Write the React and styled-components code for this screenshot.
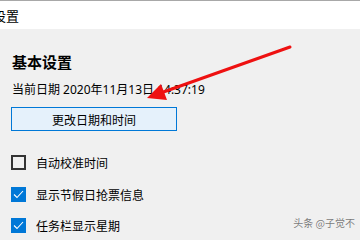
import React from "react";
import styled, { createGlobalStyle } from "styled-components";

const GlobalStyle = createGlobalStyle`
  html, body {
    margin: 0;
    padding: 0;
    background: #f0f0f0;
  }
  body {
    font-family: "Noto Sans", "Noto Sans CJK SC", sans-serif;
    color: #000;
  }
`;

const SettingsWindow = styled.div`
  position: relative;
  width: 360px;
  height: 240px;
  overflow: hidden;
  background: #f0f0f0;
  border-top: 1px solid #a8a8a8;
  box-sizing: border-box;
`;

const TitleBar = styled.div`
  height: 28px;
  background: #fff;
  display: flex;
  align-items: center;
`;

const Title = styled.span`
  margin-left: -7px;
  font-size: 13px;
  font-family: "Noto Sans CJK SC", sans-serif;
`;

const Content = styled.div`
  padding: 0 12px;
`;

const Heading = styled.h2`
  margin: 23px 0 0;
  font-size: 15px;
  line-height: 20px;
  font-weight: 700;
  font-family: "Noto Sans CJK SC", sans-serif;
`;

const DateLine = styled.div`
  margin-top: 10px;
  font-size: 12px;
  line-height: 16px;
`;

const ChangeButton = styled.button`
  display: block;
  margin: 9px 0 0 -1px;
  width: 166px;
  height: 24px;
  padding: 0;
  background: #e5f1fb;
  border: 1px solid #0078d7;
  font-family: "Noto Sans CJK SC", sans-serif;
  font-size: 12px;
  color: #000;
`;

const CheckList = styled.div`
  margin-top: 16px;
  display: flex;
  flex-direction: column;
`;

const CheckRow = styled.label`
  height: 31.5px;
  display: flex;
  align-items: center;
  font-size: 12px;
  font-family: "Noto Sans CJK SC", sans-serif;
`;

const Box = styled.span`
  width: 15px;
  height: 15px;
  margin-left: -1px;
  box-sizing: border-box;
  display: flex;
  align-items: center;
  justify-content: center;
  background: ${(p) => (p.$checked ? "#0078d7" : "transparent")};
  border: ${(p) => (p.$checked ? "none" : "2px solid #333")};
`;

const CheckText = styled.span`
  margin-left: 10px;
`;

const Overlay = styled.svg`
  position: absolute;
  left: 0;
  top: 0;
  pointer-events: none;
`;

const Watermark = styled.div`
  position: absolute;
  right: 5px;
  bottom: 10px;
  font-size: 10px;
  color: #7a7a7a;
  font-family: "Noto Sans CJK SC", sans-serif;
  text-shadow: 0 0 1px #fff;
`;

function CheckItem({ checked, children }) {
  return (
    <CheckRow>
      <Box $checked={checked}>
        {checked && (
          <svg width="11" height="9" viewBox="0 0 11 9">
            <path d="M1 4.5 L4 7.5 L10 1" fill="none" stroke="#fff" strokeWidth="1.1" />
          </svg>
        )}
      </Box>
      <CheckText>{children}</CheckText>
    </CheckRow>
  );
}

export default function App() {
  return (
    <>
      <GlobalStyle />
      <SettingsWindow>
        <TitleBar>
          <Title>设置</Title>
        </TitleBar>
        <Content>
          <Heading>基本设置</Heading>
          <DateLine>当前日期 2020年11月13日 14:37:19</DateLine>
          <ChangeButton>更改日期和时间</ChangeButton>
          <CheckList>
            <CheckItem checked={false}>自动校准时间</CheckItem>
            <CheckItem checked>显示节假日抢票信息</CheckItem>
            <CheckItem checked>任务栏显示星期</CheckItem>
          </CheckList>
        </Content>
        <Overlay width="360" height="240" viewBox="0 0 360 240">
          <line x1="290" y1="46" x2="162" y2="91.5" stroke="#ee1111" strokeWidth="3" strokeLinecap="round" />
          <polygon points="147,97 161,83 167,99" fill="#ee1111" />
        </Overlay>
        <Watermark>头条 @子觉不</Watermark>
      </SettingsWindow>
    </>
  );
}
